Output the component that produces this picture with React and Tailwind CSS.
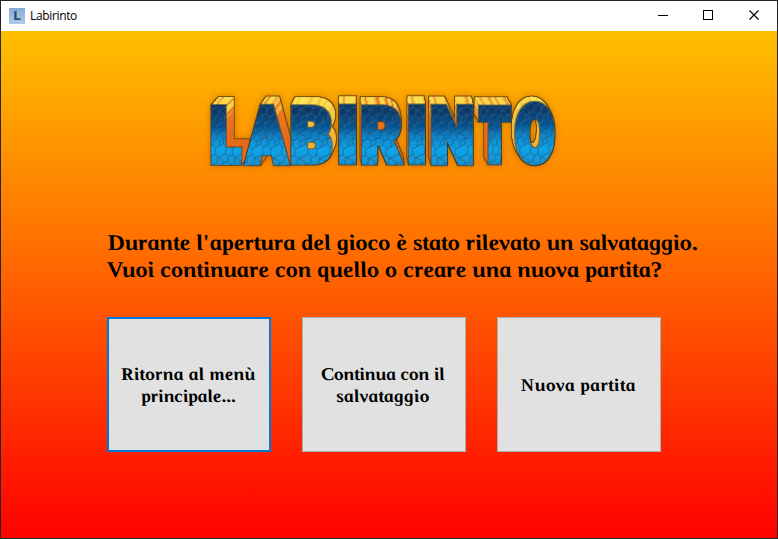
import React from "react";

// Front face box of every logo letter, and the direction its depth recedes in.
const LETTERS = [
  { ch: "L", x: 211, w: 31, y: 105, h: 60, dx: 8, dy: -8.5, weight: 9 },
  { ch: "A", x: 244.5, w: 44.5, y: 105, h: 60, dx: 6, dy: -8.5, weight: 7 },
  { ch: "B", x: 291, w: 41, y: 105, h: 60, dx: 4, dy: -8.5, weight: 6, gold: true },
  { ch: "I", x: 339, w: 17, y: 105, h: 60, dx: 0, dy: -8.5, weight: 8 },
  { ch: "R", x: 361.5, w: 41, y: 105, h: 60, dx: -1, dy: -8.5, weight: 6 },
  { ch: "I", x: 408.5, w: 16.5, y: 105, h: 60, dx: -1, dy: -8.5, weight: 8 },
  { ch: "N", x: 431, w: 42, y: 105, h: 60, dx: -2, dy: -8.5, weight: 7 },
  { ch: "T", x: 478.5, w: 32.5, y: 105, h: 60, dx: -4.5, dy: -8.5, weight: 8 },
  { ch: "O", x: 514.5, w: 40.5, y: 102, h: 63, dx: -3.5, dy: -5.5, weight: 7, gold: true },
];

const ctx = document.createElement("canvas").getContext("2d");

function fit(l) {
  ctx.font = "900 84px Roboto";
  const m = ctx.measureText(l.ch);
  const left = -m.actualBoundingBoxLeft - l.weight / 2;
  const top = m.actualBoundingBoxAscent + l.weight / 2;
  const sx = l.w / (m.actualBoundingBoxRight + l.weight / 2 - left);
  const sy = l.h / (top + m.actualBoundingBoxDescent + l.weight / 2);
  return `translate(${l.x - left * sx} ${l.y + top * sy}) scale(${sx} ${sy})`;
}

const STEPS = [12, 11, 10, 9, 8, 7, 6, 5, 4, 3, 2, 1];

// Extrudes the letter backwards and recolours the receding copies as sunlit stone.
function Extrude({ id, l }) {
  return (
    <filter id={id} filterUnits="userSpaceOnUse" x={l.x - 14} y="88" width={l.w + 28} height="86" colorInterpolationFilters="sRGB">
      <feColorMatrix in="SourceGraphic" type="matrix" values="0 1 0 0 0  0 1 0 0 0  0 1 0 0 0  0 0 0 1 0" />
      <feComponentTransfer result="side">
        <feFuncR type="table" tableValues={l.gold ? ".9 1 1 .97 .97 .96 .96 .96 .8 .7 .6" : ".8 1 1 .91 .91 .9 .9 .88 .7 .6 .5"} />
        <feFuncG type="table" tableValues={l.gold ? ".7 .85 .92 .78 .74 .72 .7 .68 .5 .4 .3" : ".5 .85 .92 .46 .45 .43 .42 .4 .3 .25 .2"} />
        <feFuncB type="table" tableValues={l.gold ? ".1 .3 .35 .26 .22 .2 .2 .18 .1 .1 .1" : ".1 .25 .33 .13 .12 .12 .1 .1 .1 .1 .1"} />
      </feComponentTransfer>
      {STEPS.map((s) => (
        <feOffset key={s} in="side" dx={(l.dx * s) / 12} dy={(l.dy * s) / 12} result={`o${s}`} />
      ))}
      <feMerge result="body">
        {STEPS.map((s) => (
          <feMergeNode key={s} in={`o${s}`} />
        ))}
      </feMerge>
      <feMorphology in="body" operator="dilate" radius="0.5" result="fat" />
      <feColorMatrix in="fat" type="matrix" values="0 0 0 0 .35  0 0 0 0 .24  0 0 0 0 .08  0 0 0 .75 0" result="rim" />
      <feMorphology in="SourceAlpha" operator="dilate" radius="0.5" result="fatFace" />
      <feColorMatrix in="fatFace" type="matrix" values="0 0 0 0 .1  0 0 0 0 .2  0 0 0 0 .25  0 0 0 .6 0" result="faceRim" />
      <feMerge>
        <feMergeNode in="rim" />
        <feMergeNode in="body" />
        <feMergeNode in="faceRim" />
        <feMergeNode in="SourceGraphic" />
      </feMerge>
    </filter>
  );
}

const CRACKS =
  "M0 4L5 2L9 5L8 10L3 11L0 8M9 5L15 3L18 6L17 11L12 13L8 10M18 6L24 4M17 11L21 14L24 12M3 11L2 16L6 19L11 17L12 13M11 17L15 21L20 19L21 14M6 19L5 24M15 21L14 24M5 2L5 0M15 3L14 0M0 12L3 11M0 17L2 16M20 19L24 17M24 8L18 6";

function Logo() {
  return (
    <svg className="block h-[100px] w-[376px]" viewBox="195 80 376 100">
      <defs>
        <linearGradient id="tone" x1="0" y1="0" x2="0" y2="1">
          <stop offset="0" stopColor="#0b3664" />
          <stop offset="0.14" stopColor="#0a3868" />
          <stop offset="0.36" stopColor="#06528e" />
          <stop offset="0.54" stopColor="#0886cc" />
          <stop offset="0.72" stopColor="#0ba4ea" />
          <stop offset="1" stopColor="#1a90cc" />
        </linearGradient>
        <pattern id="stones" width="24" height="24" patternUnits="userSpaceOnUse" patternTransform="scale(1.15)">
          <path d={CRACKS} fill="none" stroke="#8fd8f8" strokeOpacity="0.4" strokeWidth="0.7" transform="translate(.7 .8)" />
          <path d={CRACKS} fill="none" stroke="#06355c" strokeOpacity="0.75" strokeWidth="0.8" />
        </pattern>
        <pattern id="face" x="-10" y="-66" width="120" height="72" patternUnits="userSpaceOnUse">
          <rect width="120" height="72" fill="url(#tone)" />
          <rect width="120" height="72" fill="url(#stones)" />
        </pattern>
        {LETTERS.map((l, i) => (
          <Extrude key={i} id={`extrude${i}`} l={l} />
        ))}
        <filter id="halo" x="-5%" y="-20%" width="110%" height="140%">
          <feDropShadow dx="0" dy="0" stdDeviation="3" floodColor="#6b3b00" floodOpacity="0.4" />
        </filter>
      </defs>
      <g filter="url(#halo)" fontFamily="Roboto, sans-serif" fontWeight="900" fontSize="84">
        {LETTERS.map((l, i) => (
          <g key={i} filter={`url(#extrude${i})`}>
            <text transform={fit(l)} fill="url(#face)" stroke="url(#face)" strokeWidth={l.weight}>
              {l.ch}
            </text>
          </g>
        ))}
      </g>
    </svg>
  );
}

// Cursive letterforms slanted back upright and slightly broadened.
function Script({ children, className }) {
  return (
    <span className={`block scale-x-[1.07] skew-x-[11deg] whitespace-nowrap font-['Liberation_Serif',serif] font-bold italic text-black ${className}`}>
      {children}
    </span>
  );
}

export default function App() {
  return (
    <div className="flex h-[539px] w-[778px] flex-col overflow-hidden border border-[#252525] bg-white">
      <header className="flex h-[30px] shrink-0 items-center bg-white pl-2">
        <div className="flex size-4 items-center justify-center bg-gradient-to-b from-[#83a9d8] to-[#b4c9e6]">
          <span className="font-['Roboto',sans-serif] text-[13px] leading-4 font-black text-[#14558c] [text-shadow:1px_0_0_#c1b878]">L</span>
        </div>
        <span className="ml-[5px] font-['Open_Sans',sans-serif] text-[12px] leading-4 tracking-[-0.35px] text-black">Labirinto</span>
        <svg className="ml-auto h-[30px] w-[138px]" viewBox="-1 0 138 30" fill="none" stroke="#000" shapeRendering="crispEdges">
          <path d="M18 14.5h10M63.5 9.5h9v9h-9z" />
          <path d="M109.5 9.5l9 9M118.5 9.5l-9 9" shapeRendering="auto" strokeWidth="1.1" />
        </svg>
      </header>
      <main className="flex flex-1 flex-col bg-gradient-to-b from-[#ffc000] to-[#ff0000] pt-[49px] [--tw-gradient-position:to_bottom]">
        <div className="pl-[194px]">
          <Logo />
        </div>
        <div className="mt-[49px] flex flex-col items-start pl-[106px]">
          <Script className="origin-left text-[22.5px] leading-[27px]">Durante l'apertura del gioco è stato rilevato un salvataggio.</Script>
          <Script className="origin-left text-[22.5px] leading-[27px] tracking-[0.03px]">Vuoi continuare con quello o creare una nuova partita?</Script>
        </div>
        <div className="mt-[34px] flex gap-[31px] pl-[106px]">
          <button className="flex h-[135px] w-[164px] flex-col items-center justify-center border-2 border-[#0078d7] bg-[#e1e1e1] pr-[2px]">
            <Script className="text-[18px] leading-[22px] tracking-[0.25px]">Ritorna al menù</Script>
            <Script className="text-[18px] leading-[22px]">principale...</Script>
          </button>
          <button className="flex h-[135px] w-[164px] flex-col items-center justify-center border border-[#adadad] bg-[#e1e1e1] pr-[2px]">
            <Script className="text-[18px] leading-[22px] tracking-[-0.05px]">Continua con il</Script>
            <Script className="text-[18px] leading-[22px] tracking-[0.3px]">salvataggio</Script>
          </button>
          <button className="flex h-[135px] w-[164px] flex-col items-center justify-center border border-[#adadad] bg-[#e1e1e1] pr-[3px]">
            <Script className="text-[18px] leading-[22px] tracking-[0.4px]">Nuova partita</Script>
          </button>
        </div>
      </main>
    </div>
  );
}
